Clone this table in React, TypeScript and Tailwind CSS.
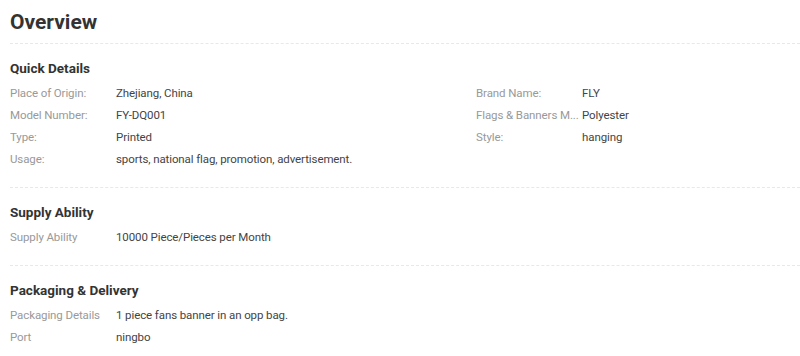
const quickDetails: [string, string][] = [
  ['Place of Origin:', 'Zhejiang, China'],
  ['Brand Name:', 'FLY'],
  ['Model Number:', 'FY-DQ001'],
  ['Flags & Banners M...', 'Polyester'],
  ['Type:', 'Printed'],
  ['Style:', 'hanging'],
  ['Usage:', 'sports, national flag, promotion, advertisement.'],
];

const supply: [string, string][] = [['Supply Ability', '10000 Piece/Pieces per Month']];

const packaging: [string, string][] = [
  ['Packaging Details', '1 piece fans banner in an opp bag.'],
  ['Port', 'ningbo'],
];

function Row({ label, value }: { label: string; value: string }) {
  return (
    <div className="flex h-[22px] items-center text-[11.5px] leading-[22px] tracking-[-0.1px]">
      <div className="w-[106px] shrink-0 whitespace-nowrap text-[#999]">{label}</div>
      <div className="whitespace-nowrap text-[#444]">{value}</div>
    </div>
  );
}

function Section({ title, rows, cols = 1 }: { title: string; rows: [string, string][]; cols?: number }) {
  return (
    <div className="border-b border-dashed border-[#e8e8e8] pt-[14px] pb-[17px]">
      <h3 className="text-[13.5px] leading-[20px] font-bold text-[#333]">{title}</h3>
      <div className={`mt-[4px] grid ${cols === 2 ? 'grid-cols-[466px_1fr]' : 'grid-cols-1'}`}>
        {rows.map(([l, v]) => (
          <Row key={l} label={l} value={v} />
        ))}
      </div>
    </div>
  );
}

export default function App() {
  return (
    <div className="h-[356px] w-[800px] overflow-hidden bg-white pl-[10px]" style={{ fontFamily: 'Roboto, "Liberation Sans", sans-serif' }}>
      <div className="border-b border-dashed border-[#e8e8e8] pt-[8px] pb-[7px]">
        <h2 className="text-[21px] leading-[28px] font-bold text-[#333]">Overview</h2>
      </div>
      <Section title="Quick Details" rows={quickDetails} cols={2} />
      <Section title="Supply Ability" rows={supply} />
      <Section title="Packaging & Delivery" rows={packaging} />
    </div>
  );
}
